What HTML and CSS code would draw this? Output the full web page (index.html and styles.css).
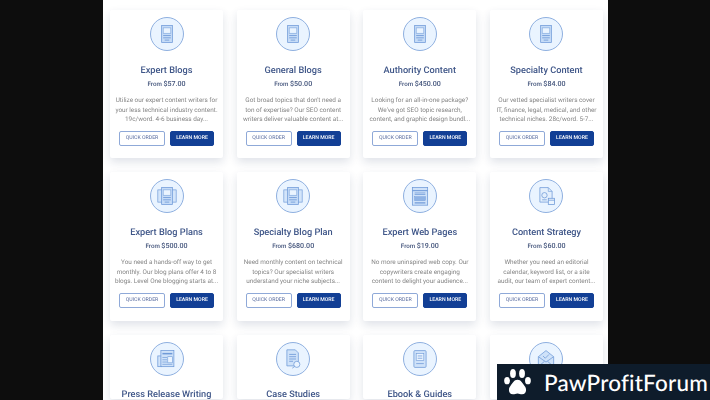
FILE: index.html
```html
<!DOCTYPE html>
<html lang="en">
<head>
    <meta charset="UTF-8">
    <meta name="viewport" content="width=device-width, initial-scale=1.0">
    <title>Content Writing Services</title>
    <link rel="stylesheet" href="styles.css">
</head>
<body>
    <svg class="defs" width="0" height="0">
        <symbol id="doc" viewBox="0 0 34 34">
            <rect x="10" y="6" width="14" height="22" fill="#c6dcf7" stroke="#6f9ad8"/>
            <rect x="12" y="9" width="10" height="7" fill="#eaf4ff" stroke="#6f9ad8" stroke-width=".7"/>
            <path d="M12 19h10M12 22h10M14 25h6" stroke="#6f9ad8" stroke-width="1.1"/>
        </symbol>
        <symbol id="plan" viewBox="0 0 34 34">
            <rect x="5" y="9" width="6" height="16" fill="#d3e5fa" stroke="#6f9ad8" stroke-width=".9"/>
            <rect x="23" y="9" width="6" height="16" fill="#d3e5fa" stroke="#6f9ad8" stroke-width=".9"/>
            <rect x="10" y="6" width="14" height="22" fill="#c6dcf7" stroke="#6f9ad8"/>
            <rect x="12" y="9" width="10" height="7" fill="#eaf4ff" stroke="#6f9ad8" stroke-width=".7"/>
            <path d="M12 19h10M12 22h10M14 25h6" stroke="#6f9ad8" stroke-width="1.1"/>
        </symbol>
        <symbol id="web" viewBox="0 0 34 34">
            <rect x="7" y="6" width="20" height="23" fill="#cfe2f9" stroke="#6f9ad8"/>
            <path d="M7 10h20" stroke="#6f9ad8" stroke-width="1.4"/>
            <path d="M10 13h14M10 15h14" stroke="#6f9ad8"/>
            <rect x="10" y="18" width="14" height="5" fill="#8fb3e5" stroke="#6f9ad8" stroke-width=".6"/>
            <path d="M10 26h14" stroke="#6f9ad8" stroke-width="1.6"/>
        </symbol>
        <symbol id="strategy" viewBox="0 0 34 34">
            <path d="M9 6h11l5 5v14H9z" fill="#e3effc" stroke="#6f9ad8"/>
            <path d="M20 6v5h5" fill="none" stroke="#6f9ad8" stroke-width=".8"/>
            <circle cx="15" cy="16" r="3.500" fill="none" stroke="#6f9ad8"/>
            <path d="M12 22h6" stroke="#6f9ad8"/>
            <rect x="20" y="20" width="8" height="8" fill="#eaf4ff" stroke="#6f9ad8"/>
            <path d="M20 22.500h8" stroke="#6f9ad8"/>
        </symbol>
        <symbol id="press" viewBox="0 0 34 34">
            <rect x="5" y="13" width="5" height="14" fill="#d3e5fa" stroke="#6f9ad8"/>
            <rect x="9" y="6" width="17" height="21" fill="#cfe2f9" stroke="#6f9ad8"/>
            <path d="M11 10h13" stroke="#6f9ad8" stroke-width="2"/>
            <path d="M11 15h6M11 18h6M11 21h6M11 24h13" stroke="#6f9ad8" stroke-width=".9"/>
            <rect x="18" y="14" width="6" height="8" fill="#eaf4ff" stroke="#6f9ad8" stroke-width=".8"/>
        </symbol>
        <symbol id="case" viewBox="0 0 34 34">
            <path d="M9 5h11l4 4v17H9z" fill="#cfe2f9" stroke="#6f9ad8"/>
            <path d="M12 11h9M12 14h9M12 17h9M12 20h5" stroke="#6f9ad8" stroke-width="1.1"/>
            <circle cx="22" cy="24" r="4" fill="#eaf4ff" stroke="#6f9ad8"/>
            <path d="M19 27l-3 2" stroke="#6f9ad8"/>
        </symbol>
        <symbol id="ebook" viewBox="0 0 34 34">
            <rect x="9" y="6" width="16" height="22" rx="1.500" fill="#cfe2f9" stroke="#6f9ad8"/>
            <rect x="12" y="10" width="10" height="9" fill="#eaf4ff" stroke="#6f9ad8" stroke-width=".8"/>
            <path d="M14 13h6M14 16h6M12 23h10" stroke="#6f9ad8"/>
        </symbol>
        <symbol id="mail" viewBox="0 0 34 34">
            <path d="M7 14l10-8 10 8v13H7z" fill="#cfe2f9" stroke="#6f9ad8"/>
            <path d="M7 14l10 7 10-7M7 27l8-7M27 27l-8-7" fill="none" stroke="#6f9ad8"/>
            <path d="M13 13l3 3 5-5" fill="none" stroke="#6f9ad8"/>
        </symbol>
    </svg>

    <div class="page">
        <div class="cards">
            <div class="card">
                <div class="card-icon"><svg><use href="#doc"/></svg></div>
                <h3>Expert Blogs</h3>
                <p class="price">From <b>$57.00</b></p>
                <p class="desc">Utilize our expert content writers for<br>your less technical industry content.<br>19c/word. 4-6 business day...</p>
                <div class="actions"><a class="btn btn-line">QUICK ORDER</a><a class="btn btn-fill">LEARN MORE</a></div>
            </div>
            <div class="card">
                <div class="card-icon"><svg><use href="#doc"/></svg></div>
                <h3>General Blogs</h3>
                <p class="price">From <b>$50.00</b></p>
                <p class="desc">Got broad topics that don't need a<br>ton of expertise? Our SEO content<br>writers deliver valuable content at...</p>
                <div class="actions"><a class="btn btn-line">QUICK ORDER</a><a class="btn btn-fill">LEARN MORE</a></div>
            </div>
            <div class="card">
                <div class="card-icon"><svg><use href="#doc"/></svg></div>
                <h3>Authority Content</h3>
                <p class="price">From <b>$450.00</b></p>
                <p class="desc">Looking for an all-in-one package?<br>We've got SEO topic research,<br>content, and graphic design bundl...</p>
                <div class="actions"><a class="btn btn-line">QUICK ORDER</a><a class="btn btn-fill">LEARN MORE</a></div>
            </div>
            <div class="card">
                <div class="card-icon"><svg><use href="#doc"/></svg></div>
                <h3>Specialty Content</h3>
                <p class="price">From <b>$84.00</b></p>
                <p class="desc">Our vetted specialist writers cover<br>IT, finance, legal, medical, and other<br>technical niches. 28c/word. 5-7...</p>
                <div class="actions"><a class="btn btn-line">QUICK ORDER</a><a class="btn btn-fill">LEARN MORE</a></div>
            </div>

            <div class="card">
                <div class="card-icon"><svg><use href="#plan"/></svg></div>
                <h3>Expert Blog Plans</h3>
                <p class="price">From <b>$500.00</b></p>
                <p class="desc">You need a hands-off way to get<br>monthly. Our blog plans offer 4 to 8<br>blogs. Level One blogging starts at...</p>
                <div class="actions"><a class="btn btn-line">QUICK ORDER</a><a class="btn btn-fill">LEARN MORE</a></div>
            </div>
            <div class="card">
                <div class="card-icon"><svg><use href="#plan"/></svg></div>
                <h3>Specialty Blog Plan</h3>
                <p class="price">From <b>$680.00</b></p>
                <p class="desc">Need monthly content on technical<br>topics? Our specialist writers<br>understand your niche subjects...</p>
                <div class="actions"><a class="btn btn-line">QUICK ORDER</a><a class="btn btn-fill">LEARN MORE</a></div>
            </div>
            <div class="card">
                <div class="card-icon"><svg><use href="#web"/></svg></div>
                <h3>Expert Web Pages</h3>
                <p class="price">From <b>$19.00</b></p>
                <p class="desc">No more uninspired web copy. Our<br>copywriters create engaging<br>content to delight your audience...</p>
                <div class="actions"><a class="btn btn-line">QUICK ORDER</a><a class="btn btn-fill">LEARN MORE</a></div>
            </div>
            <div class="card">
                <div class="card-icon"><svg><use href="#strategy"/></svg></div>
                <h3>Content Strategy</h3>
                <p class="price">From <b>$60.00</b></p>
                <p class="desc">Whether you need an editorial<br>calendar, keyword list, or a site<br>audit, our team of expert content...</p>
                <div class="actions"><a class="btn btn-line">QUICK ORDER</a><a class="btn btn-fill">LEARN MORE</a></div>
            </div>

            <div class="card">
                <div class="card-icon"><svg><use href="#press"/></svg></div>
                <h3>Press Release Writing</h3>
            </div>
            <div class="card">
                <div class="card-icon"><svg><use href="#case"/></svg></div>
                <h3>Case Studies</h3>
            </div>
            <div class="card">
                <div class="card-icon"><svg><use href="#ebook"/></svg></div>
                <h3>Ebook &amp; Guides</h3>
            </div>
            <div class="card">
                <div class="card-icon"><svg><use href="#mail"/></svg></div>
            </div>
        </div>
    </div>

    <div class="forum-badge">
        <svg class="paw" viewBox="0 0 32 32">
            <ellipse cx="4.500" cy="14" rx="3.200" ry="4" fill="#fff"/>
            <ellipse cx="11" cy="6" rx="3.200" ry="5" fill="#fff"/>
            <ellipse cx="21" cy="6" rx="3.200" ry="5" fill="#fff"/>
            <ellipse cx="27.500" cy="14" rx="3.200" ry="4" fill="#fff"/>
            <path d="M16 13c-4 0-5.500 4-8 7-2.500 3-2 9 3 9 2 0 3-1 5-1s3 1 5 1c5 0 5.500-6 3-9-2.500-3-4-7-8-7z" fill="#fff"/>
        </svg>
        <span class="forum-name">PawProfitForum</span>
    </div>
</body>
</html>
```

FILE: styles.css
```css
html, body {
    height: 400px;
    overflow: hidden;
}
body {
    font-family: Roboto, sans-serif;
    background-color: #0d0d0d;
    margin: 0;
    text-rendering: geometricPrecision;
}
.defs {
    position: absolute;
}
.page {
    width: 505px;
    height: 400px;
    margin-left: 103px;
    padding: 10px 0 0 7px;
    box-sizing: border-box;
    background-color: #fff;
    overflow: hidden;
    filter: blur(0.4px);
}
.cards {
    display: grid;
    grid-template-columns: repeat(4, 113px);
    column-gap: 13.67px;
    row-gap: 14px;
}
.card {
    padding: 7px 0 0;
    box-sizing: border-box;
    background-color: #fff;
    border-radius: 2px;
    box-shadow: 0 4px 10px rgba(30, 50, 90, 0.14);
    text-align: center;
}
.card-icon {
    display: flex;
    align-items: center;
    justify-content: center;
    width: 34px;
    height: 34px;
    margin: 0 auto;
    box-sizing: border-box;
    border: 1px solid #8fb0e0;
    border-radius: 50%;
    background-color: #eaf4ff;
}
.card-icon svg {
    display: block;
    width: 26px;
    height: 26px;
}
h3 {
    margin: 14.8px 0 0;
    font-size: 9.2px;
    line-height: 9px;
    font-weight: 500;
    color: #3f5688;
}
.price {
    height: 13px;
    margin: 2.4px 0 0;
    font-size: 6.2px;
    line-height: 13px;
    font-weight: 500;
    color: #44557c;
}
.price b {
    font-size: 7.1px;
    font-weight: 500;
}
.desc {
    height: 28.5px;
    margin: 6px 0 0;
    font-size: 6.4px;
    line-height: 9.5px;
    color: #858585;
}
.actions {
    display: flex;
    justify-content: center;
    gap: 5px;
    margin: 6.3px 0 12.3px;
}
.btn {
    display: block;
    height: 15px;
    box-sizing: border-box;
    border-radius: 2px;
    font-size: 5.2px;
    line-height: 13px;
    text-align: center;
}
.btn-line {
    width: 46px;
    border: 1px solid #8fa9d8;
    color: #5a6da0;
    background-color: #fff;
}
.btn-fill {
    width: 44px;
    border: 1px solid #123f95;
    color: #fff;
    font-weight: 500;
    background-color: #123f95;
}
.forum-badge {
    position: absolute;
    right: 0;
    bottom: 0;
    width: 213px;
    height: 36px;
    display: flex;
    align-items: center;
    padding-left: 6px;
    box-sizing: border-box;
    background-color: #0e1c2b;
}
.paw {
    width: 29px;
    height: 29px;
    margin-right: 12px;
}
.forum-name {
    font-family: Lato, sans-serif;
    font-size: 22.5px;
    font-weight: 500;
    letter-spacing: 0.2px;
    color: #fff;
}
```
